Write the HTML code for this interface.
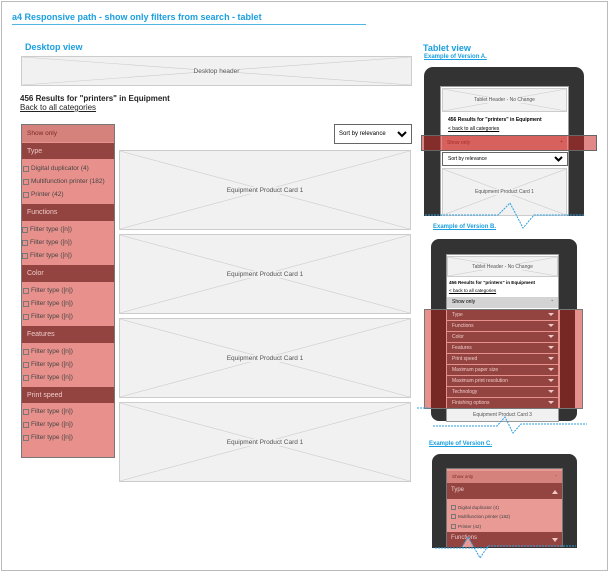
<!DOCTYPE html>
<html><head><meta charset="utf-8"><style>
*{margin:0;padding:0;box-sizing:border-box}
body{width:610px;height:573px;background:#fff;font-family:"Liberation Sans",Arial,sans-serif;position:relative;overflow:hidden}
.a{position:absolute}
.ph{position:absolute;background:#f1f1f1;border:1px solid #ccc;display:flex;align-items:center;justify-content:center;color:#555;overflow:hidden}
.ph svg{position:absolute;left:0;top:0;width:100%;height:100%}
.ph span{position:relative;background:#f1f1f1}
.blue{color:#1a9fe0;font-weight:bold}
.hd{position:absolute;background:#934441;color:#f0c8c6;font-size:7px;padding-left:5px;display:flex;align-items:center}
.it{position:absolute;font-size:6.5px;color:#444;line-height:8px;height:8px}
.cb{display:inline-block;width:6px;height:6px;border:1px solid #777;margin-right:2px;vertical-align:top;margin-top:1px}
.tb{position:absolute;background:#934441;color:#f0c8c6;font-size:5px;padding-left:5px;display:flex;align-items:center;border-bottom:1px solid #e8918c}
.tb i{position:absolute;right:4px;top:3px;width:0;height:0;border-left:3px solid transparent;border-right:3px solid transparent;border-top:3px solid #f0c8c6}
</style></head><body>
<div class="a" style="left:1px;top:1px;width:607px;height:570px;border:1px solid #bbb"></div>
<div class="a blue" style="left:12px;top:12px;font-size:9px">a4 Responsive path - show only filters from search - tablet</div>
<div class="a" style="left:12px;top:24px;width:354px;height:1px;background:#4fb6e6"></div>
<div class="a blue" style="left:25px;top:42px;font-size:9px">Desktop view</div>
<div class="ph" style="left:21px;top:56px;width:391px;height:30px;font-size:6.5px"><svg viewBox="0 0 100 100" preserveAspectRatio="none"><path d="M0 0L100 100M100 0L0 100" stroke="#ccc" stroke-width=".6" vector-effect="non-scaling-stroke"/></svg><span>Desktop header</span></div>
<div class="a" style="left:20px;top:94px;font-size:8px;font-weight:bold;color:#222">456 Results for "printers" in Equipment</div>
<div class="a" style="left:20px;top:103px;font-size:8px;color:#222;text-decoration:underline">Back to all categories</div>
<div class="a" style="left:334px;top:124px;width:78px;height:20px;border:1px solid #666;font-size:6px;padding:6px 0 0 4px">Sort by relevance<svg class="a" style="right:4px;top:6px" width="10" height="7"><path d="M1 1L5 5L9 1" stroke="#000" stroke-width="2" fill="none"/></svg></div>
<!-- sidebar -->
<div class="a" style="left:21px;top:124px;width:94px;height:334px;background:#e8918c;border:1px solid #777"></div>
<div class="a" style="left:22px;top:125px;width:92px;height:17px;background:#d5817c;color:#7a2a27;font-size:6.5px;padding:5px 0 0 5px">Show only</div>
<div class="hd" style="left:22px;top:143px;width:92px;height:16px">Type</div>
<div class="it" style="left:23px;top:165px"><span class="cb"></span>Digital duplicator (4)</div>
<div class="it" style="left:23px;top:178px"><span class="cb"></span>Multifunction printer (182)</div>
<div class="it" style="left:23px;top:191px"><span class="cb"></span>Printer (42)</div>
<div class="hd" style="left:22px;top:204px;width:92px;height:17px">Functions</div>
<div class="it" style="left:22px;top:226px"><span class="cb"></span>Filter type ([n])</div>
<div class="it" style="left:22px;top:239px"><span class="cb"></span>Filter type ([n])</div>
<div class="it" style="left:22px;top:252px"><span class="cb"></span>Filter type ([n])</div>
<div class="hd" style="left:22px;top:265px;width:92px;height:17px">Color</div>
<div class="it" style="left:23px;top:287px"><span class="cb"></span>Filter type ([n])</div>
<div class="it" style="left:23px;top:300px"><span class="cb"></span>Filter type ([n])</div>
<div class="it" style="left:23px;top:313px"><span class="cb"></span>Filter type ([n])</div>
<div class="hd" style="left:22px;top:326px;width:92px;height:17px">Features</div>
<div class="it" style="left:23px;top:348px"><span class="cb"></span>Filter type ([n])</div>
<div class="it" style="left:23px;top:361px"><span class="cb"></span>Filter type ([n])</div>
<div class="it" style="left:23px;top:374px"><span class="cb"></span>Filter type ([n])</div>
<div class="hd" style="left:22px;top:387px;width:92px;height:16px">Print speed</div>
<div class="it" style="left:23px;top:408px"><span class="cb"></span>Filter type ([n])</div>
<div class="it" style="left:23px;top:421px"><span class="cb"></span>Filter type ([n])</div>
<div class="it" style="left:23px;top:434px"><span class="cb"></span>Filter type ([n])</div>
<!-- cards -->
<div class="ph" style="left:119px;top:150px;width:292px;height:80px;font-size:6.5px"><svg viewBox="0 0 100 100" preserveAspectRatio="none"><path d="M0 0L100 100M100 0L0 100" stroke="#ccc" stroke-width=".6" vector-effect="non-scaling-stroke"/></svg><span>Equipment Product Card 1</span></div>
<div class="ph" style="left:119px;top:234px;width:292px;height:80px;font-size:6.5px"><svg viewBox="0 0 100 100" preserveAspectRatio="none"><path d="M0 0L100 100M100 0L0 100" stroke="#ccc" stroke-width=".6" vector-effect="non-scaling-stroke"/></svg><span>Equipment Product Card 1</span></div>
<div class="ph" style="left:119px;top:318px;width:292px;height:80px;font-size:6.5px"><svg viewBox="0 0 100 100" preserveAspectRatio="none"><path d="M0 0L100 100M100 0L0 100" stroke="#ccc" stroke-width=".6" vector-effect="non-scaling-stroke"/></svg><span>Equipment Product Card 1</span></div>
<div class="ph" style="left:119px;top:402px;width:292px;height:80px;font-size:6.5px"><svg viewBox="0 0 100 100" preserveAspectRatio="none"><path d="M0 0L100 100M100 0L0 100" stroke="#ccc" stroke-width=".6" vector-effect="non-scaling-stroke"/></svg><span>Equipment Product Card 1</span></div>

<!-- Tablet view A -->
<div class="a blue" style="left:423px;top:43px;font-size:9px">Tablet view</div>
<div class="a blue" style="left:424px;top:54px;font-size:6px;text-decoration:underline">Example of Version A.</div>
<div class="a" style="left:424px;top:67px;width:160px;height:149px;background:#333;border-radius:9px 9px 0 0"></div>
<div class="a" style="left:440px;top:86px;width:129px;height:130px;background:#fff;border:1px solid #999"></div>
<div class="ph" style="left:442px;top:88px;width:125px;height:24px;font-size:5px"><svg viewBox="0 0 100 100" preserveAspectRatio="none"><path d="M0 0L100 100M100 0L0 100" stroke="#ccc" stroke-width=".6" vector-effect="non-scaling-stroke"/></svg><span>Tablet Header - No Change</span></div>
<div class="a" style="left:448px;top:117px;font-size:5px;font-weight:bold">456 Results for "printers" in Equipment</div>
<div class="a" style="left:448px;top:126px;font-size:5px;text-decoration:underline">&lt; back to all categories</div>
<div class="a" style="left:442px;top:136px;width:125px;height:14px;background:#e8a9a5;font-size:5px;color:#7a2a27;padding:4px 0 0 5px">Show only<span style="position:absolute;right:4px;top:3px">+</span></div>
<div class="a" style="left:421px;top:135px;width:176px;height:16px;background:rgba(200,40,35,.55);border:1px solid #666"></div>
<div class="a" style="left:442px;top:152px;width:126px;height:14px;border:1px solid #666;background:#fff;font-size:5px;padding:3px 0 0 5px">Sort by relevance<svg class="a" style="right:4px;top:3px" width="9" height="6"><path d="M1 1L4.5 4.5L8 1" stroke="#000" stroke-width="2" fill="none"/></svg></div>
<div class="ph" style="left:442px;top:168px;width:125px;height:48px;font-size:5px"><svg viewBox="0 0 100 100" preserveAspectRatio="none"><path d="M0 0L100 100M100 0L0 100" stroke="#ccc" stroke-width=".6" vector-effect="non-scaling-stroke"/></svg><span>Equipment Product Card 1</span></div>
<svg class="a" style="left:420px;top:200px" width="170" height="30"><path d="M5 15H78L90 3L103 28L114 15H165" stroke="#2a9fe0" stroke-width="1" stroke-dasharray="2,1" fill="none"/></svg>

<!-- Version B -->
<div class="a blue" style="left:433px;top:224px;font-size:6px;text-decoration:underline">Example of Version B.</div>
<div class="a" style="left:431px;top:239px;width:146px;height:182px;background:#333;border-radius:8px"></div>
<div class="a" style="left:446px;top:254px;width:113px;height:168px;background:#fff;border:1px solid #999"></div>
<div class="ph" style="left:447px;top:256px;width:111px;height:21px;font-size:5px"><svg viewBox="0 0 100 100" preserveAspectRatio="none"><path d="M0 0L100 100M100 0L0 100" stroke="#ccc" stroke-width=".6" vector-effect="non-scaling-stroke"/></svg><span>Tablet Header - No Change</span></div>
<div class="a" style="left:449px;top:280px;font-size:4.6px;font-weight:bold">456 Results for "printers" in Equipment</div>
<div class="a" style="left:449px;top:288px;font-size:4.6px;text-decoration:underline">&lt; back to all categories</div>
<div class="a" style="left:447px;top:297px;width:111px;height:11px;background:#d3d3d3;font-size:5px;padding:2px 0 0 5px">Show only<span style="position:absolute;right:5px;top:1px">-</span></div>
<div class="a" style="left:424px;top:309px;width:159px;height:100px;background:#e8918c;border:1px solid #777"></div>
<div class="a" style="left:431px;top:310px;width:15px;height:98px;background:#782824"></div>
<div class="a" style="left:560px;top:310px;width:15px;height:98px;background:#782824"></div>
<div class="tb" style="left:447px;top:310px;width:111px;height:11px">Type<i></i></div>
<div class="tb" style="left:447px;top:321px;width:111px;height:11px">Functions<i></i></div>
<div class="tb" style="left:447px;top:332px;width:111px;height:11px">Color<i></i></div>
<div class="tb" style="left:447px;top:343px;width:111px;height:11px">Features<i></i></div>
<div class="tb" style="left:447px;top:354px;width:111px;height:11px">Print speed<i></i></div>
<div class="tb" style="left:447px;top:365px;width:111px;height:11px">Maximum paper size<i></i></div>
<div class="tb" style="left:447px;top:376px;width:111px;height:11px">Maximum print resolution<i></i></div>
<div class="tb" style="left:447px;top:387px;width:111px;height:11px">Technology<i></i></div>
<div class="tb" style="left:447px;top:398px;width:111px;height:10px;border:none">Finishing options<i></i></div>
<div class="ph" style="left:447px;top:409px;width:111px;height:12px;font-size:5px;border:none"><span>Equipment Product Card 3</span></div>
<svg class="a" style="left:415px;top:400px" width="175" height="35"><path d="M2 8H15" stroke="#2a9fe0" stroke-dasharray="2,1"/><path d="M18 26H82L90 17L98 33L106 24H172" stroke="#2a9fe0" stroke-dasharray="2,1" fill="none"/></svg>

<!-- Version C -->
<div class="a blue" style="left:429px;top:441px;font-size:6px;text-decoration:underline">Example of Version C.</div>
<div class="a" style="left:432px;top:454px;width:145px;height:94px;background:#333;border-radius:8px 8px 0 0"></div>
<div class="a" style="left:446px;top:468px;width:117px;height:79px;background:#e99a95;border:1px solid #777"></div>
<div class="a" style="left:447px;top:471px;width:115px;height:12px;background:#d5817c;font-size:4.6px;color:#7a2a27;padding:3px 0 0 5px">Show only<span style="position:absolute;right:5px;top:2px">-</span></div>
<div class="a" style="left:447px;top:483px;width:115px;height:16px;background:#934441;color:#f0c8c6;font-size:6px;padding:4px 0 0 4px">Type<svg class="a" style="right:4px;top:7px" width="6" height="4"><path d="M0 4L3 0L6 4Z" fill="#f0c8c6"/></svg></div>
<div class="it" style="left:451px;top:504px;font-size:4.6px"><span class="cb" style="width:5px;height:5px"></span>Digital duplicator (4)</div>
<div class="it" style="left:451px;top:513px;font-size:4.6px"><span class="cb" style="width:5px;height:5px"></span>Multifunction printer (182)</div>
<div class="it" style="left:451px;top:523px;font-size:4.6px"><span class="cb" style="width:5px;height:5px"></span>Printer (42)</div>
<div class="a" style="left:447px;top:532px;width:115px;height:15px;background:#934441;color:#f0c8c6;font-size:6px;padding:3px 0 0 4px">Functions<svg class="a" style="right:4px;top:6px" width="6" height="4"><path d="M0 0L3 4L6 0Z" fill="#f0c8c6"/></svg></div>
<svg class="a" style="left:430px;top:535px" width="150" height="28"><path d="M32 12L38 2L44 12Z" fill="#e99a95"/><path d="M5 13H58" stroke="#2a9fe0" stroke-dasharray="2,1"/><path d="M32 12L38 2L50 23L58 11" stroke="#2a9fe0" stroke-dasharray="2,1" fill="none"/><path d="M58 11H146" stroke="#2a9fe0" stroke-dasharray="2,1"/></svg>
</body></html>
